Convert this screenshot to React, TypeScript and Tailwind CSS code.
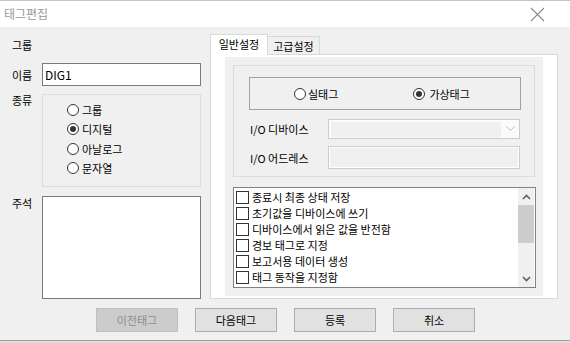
import React from "react";

const FONT = { fontFamily: '"Noto Sans CJK KR", "Noto Sans", sans-serif' };

function Radio({ checked }: { checked?: boolean }) {
  return (
    <span className="w-[12px] h-[12px] rounded-full border border-[#333333] bg-white flex items-center justify-center shrink-0">
      {checked && <span className="w-[6px] h-[6px] rounded-full bg-[#333333]" />}
    </span>
  );
}

function RadioItem({ label, checked }: { label: string; checked?: boolean }) {
  return (
    <div className="flex items-center gap-[3px] h-[19.5px]">
      <Radio checked={checked} />
      <span>{label}</span>
    </div>
  );
}

function CheckItem({ label }: { label: string }) {
  return (
    <div className="flex items-center h-[16px] pl-[2px] gap-[3px]">
      <span className="w-[13px] h-[13px] border border-[#333333] bg-white shrink-0" />
      <span className="whitespace-nowrap">{label}</span>
    </div>
  );
}

function Chevron({ up }: { up?: boolean }) {
  return (
    <svg width="9" height="6" viewBox="0 0 9 6">
      <path
        d={up ? "M1 5 L4.5 1.5 L8 5" : "M1 1 L4.5 4.5 L8 1"}
        fill="none"
        stroke="#606060"
        strokeWidth="1.6"
      />
    </svg>
  );
}

function Btn({ label, disabled }: { label: string; disabled?: boolean }) {
  return (
    <div
      className={
        "w-[82px] h-[24px] flex items-center justify-center border " +
        (disabled
          ? "bg-[#cccccc] border-[#bfbfbf] text-[#8d8d8d]"
          : "bg-[#e1e1e1] border-[#adadad] text-black")
      }
    >
      {label}
    </div>
  );
}

export default function App() {
  return (
    <div
      className="w-[570px] h-[343px] bg-[#f0f0f0] flex flex-col overflow-hidden text-[11px] leading-[16px] text-black"
      style={FONT}
    >
      {/* top edge */}
      <div className="h-[1px] bg-[#c4c4c4] shrink-0" />
      {/* title bar */}
      <div className="h-[26px] bg-white flex items-center justify-between pl-[4px] pr-[25px] shrink-0">
        <span className="text-[12px] text-[#9a9a9a]">태그편집</span>
        <svg width="15" height="15" viewBox="0 0 15 15">
          <path d="M1 1 L14 14 M14 1 L1 14" stroke="#8a8a8a" strokeWidth="1.1" fill="none" />
        </svg>
      </div>

      {/* body */}
      <div className="flex pl-[12px]">
        {/* left column */}
        <div className="w-[189px] flex flex-col pt-[10px]">
          <div className="h-[16px]">그룹</div>
          <div className="flex items-center mt-[10px]">
            <span className="w-[30px]">이름</span>
            <div className="w-[159px] h-[23px] bg-white border border-[#7a7a7a] flex items-center pl-[2px] text-[12px]">
              DIG1
            </div>
          </div>
          <div className="flex items-start mt-[8px]">
            <span className="w-[30px] mt-[-2px]">종류</span>
            <div className="w-[159px] h-[93px] border border-[#dcdcdc] pl-[24px] pt-[5px] flex flex-col">
              <RadioItem label="그룹" />
              <RadioItem label="디지털" checked />
              <RadioItem label="아날로그" />
              <RadioItem label="문자열" />
            </div>
          </div>
          <div className="flex items-start mt-[9px]">
            <span className="w-[30px] mt-[-1px]">주석</span>
            <div className="w-[159px] h-[103px] bg-white border border-[#7a7a7a]" />
          </div>
        </div>

        {/* tab control */}
        <div className="ml-[9px] w-[348px] flex flex-col mt-[7px]">
          <div className="flex items-end h-[20px] relative z-10">
            <div className="w-[58px] h-[21px] mb-[-1px] bg-white border border-b-0 border-[#d9d9d9] flex items-center justify-center pb-[2px]">
              일반설정
            </div>
            <div className="w-[52px] h-[18px] bg-[#f0f0f0] border border-l-0 border-b-0 border-[#d9d9d9] flex items-center justify-center">
              고급설정
            </div>
          </div>
          <div className="h-[245px] bg-white border border-[#d9d9d9] px-[14px] pt-[2px] pb-[2px]">
            <div className="w-[318px] h-full bg-[#f0f0f0] p-[8px] flex flex-col">
              {/* group box */}
              <div className="w-[302px] h-[112px] border border-[#dcdcdc] pl-[15px] pt-[11px] flex flex-col">
                <div className="w-[272px] h-[33px] border border-[#a0a0a0] flex items-center">
                  <div className="ml-[44px] flex items-center gap-[2px]">
                    <Radio />
                    <span>실태그</span>
                  </div>
                  <div className="ml-[75px] flex items-center gap-[4px]">
                    <Radio checked />
                    <span>가상태그</span>
                  </div>
                </div>
                <div className="flex items-center mt-[9px]">
                  <span className="w-[79px] pl-[1px]">I/O 디바이스</span>
                  <div className="w-[192px] h-[20px] border border-[#cccccc] bg-[#fbfbfb] flex items-center pl-[2px]">
                    <div className="w-[170px] h-[15px] bg-[#f0f0f0]" />
                    <div className="flex-1 flex items-center justify-center">
                      <svg width="9" height="6" viewBox="0 0 9 6">
                        <path d="M0.5 0.5 L4.5 4.5 L8.5 0.5" fill="none" stroke="#bdbdbd" strokeWidth="1" />
                      </svg>
                    </div>
                  </div>
                </div>
                <div className="flex items-center mt-[7px]">
                  <span className="w-[79px] pl-[1px]">I/O 어드레스</span>
                  <div className="w-[192px] h-[23px] border border-[#cccccc] bg-[#f0f0f0] shadow-[inset_0_0_0_1px_#ffffff]" />
                </div>
              </div>
              {/* check list */}
              <div className="mt-[10px] w-[303px] h-[101px] bg-white border border-[#828282] flex">
                <div className="flex-1 flex flex-col pt-[1px]">
                  <CheckItem label="종료시 최종 상태 저장" />
                  <CheckItem label="초기값을 디바이스에 쓰기" />
                  <CheckItem label="디바이스에서 읽은 값을 반전함" />
                  <CheckItem label="경보 태그로 지정" />
                  <CheckItem label="보고서용 데이터 생성" />
                  <CheckItem label="태그 동작을 지정함" />
                </div>
                <div className="w-[16px] mr-[1px] bg-[#f0f0f0] flex flex-col">
                  <div className="h-[17px] flex items-center justify-center">
                    <Chevron up />
                  </div>
                  <div className="h-[38px] bg-[#cdcdcd]" />
                  <div className="flex-1" />
                  <div className="h-[17px] flex items-center justify-center">
                    <Chevron />
                  </div>
                </div>
              </div>
            </div>
          </div>
        </div>
      </div>

      {/* buttons */}
      <div className="flex pl-[96px] gap-[17px] mt-[9px]">
        <Btn label="이전태그" disabled />
        <Btn label="다음태그" />
        <Btn label="등록" />
        <Btn label="취소" />
      </div>
      <div className="flex-1" />
      <div className="h-[1px] bg-[#a0a0a0] shrink-0" />
      <div className="h-[2px] bg-[#dedede] shrink-0" />
    </div>
  );
}
